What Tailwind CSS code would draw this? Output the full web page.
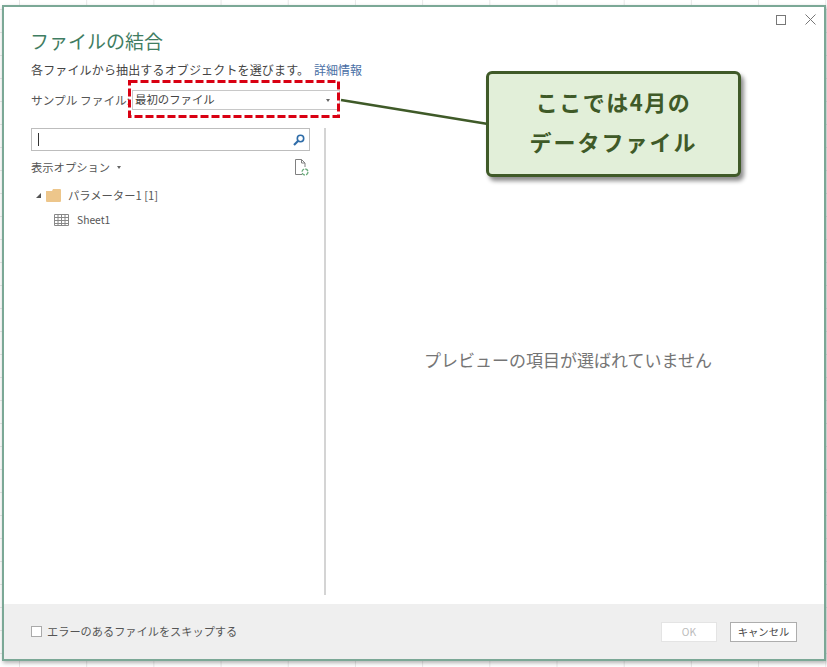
<!DOCTYPE html>
<html lang="ja"><head><meta charset="utf-8"><script src="https://cdn.jsdelivr.net/npm/@tailwindcss/browser@4"></script></head>
<body class="m-0 overflow-hidden bg-white font-['Noto_Sans_CJK_JP','Noto_Sans',sans-serif]">
<div class="relative h-[667px] w-[827px] overflow-hidden bg-[linear-gradient(to_right,#e8e8e8_1px,transparent_1px),linear-gradient(to_bottom,#e8e8e8_1px,transparent_1px)] bg-[size:67.2px_23px] bg-[position:19px_9px] pt-[5px] pl-[2px]">
  <div class="flex h-[656px] w-[824px] flex-col border-2 border-[#7ba896] bg-white shadow-[1px_2px_4px_rgba(0,0,0,0.3)]">
    <div class="flex h-[20px] shrink-0 items-end justify-end gap-[19px] pr-[8px] pb-[2px]">
      <svg width="10" height="10" viewBox="0 0 10 10" fill="none" stroke="#777"><rect x=".5" y=".5" width="9" height="9"/></svg>
      <svg width="11" height="11" viewBox="0 0 11 11" fill="none" stroke="#777"><path d="M.5.5l10 10M10.500.5l-10 10"/></svg>
    </div>
    <div class="flex flex-1 flex-col pl-[27px]">
      <h1 class="-ml-px text-[19px] leading-[28px] font-normal text-[#3f7d62]">ファイルの結合</h1>
      <p class="mt-[5px] text-[12px] leading-[20px] tracking-[0.15px] text-[#444]">各ファイルから抽出するオブジェクトを選びます。 <span class="ml-[2px] tracking-normal text-[#4a6fa5]">詳細情報</span></p>
      <div class="mt-[10px] flex items-center">
        <span class="w-[101px] text-[11.7px] whitespace-nowrap text-[#555]">サンプル ファイル:</span>
        <div class="flex h-[20px] w-[208px] items-center justify-between border border-[#c8c8c8] pr-[9px] pl-[2px] text-[11.4px] text-[#444]">最初のファイル<span class="h-0 w-0 border-x-[2.5px] border-t-[3px] border-x-transparent border-t-[#666]"></span></div>
      </div>
      <div class="mt-[18px] flex flex-1">
        <div class="w-[279px] shrink-0">
          <div class="flex h-[23px] items-center justify-between border border-[#bdbdbd] pr-[4px] pl-[6px]">
            <span class="h-[13px] w-px bg-[#333]"></span>
            <svg width="12" height="12" viewBox="0 0 12 12" fill="none" stroke="#2e6ca8" stroke-width="1.6"><circle cx="7.500" cy="4.500" r="3.200"/><path d="M5 7l-4 4" stroke-width="2.200"/></svg>
          </div>
          <div class="mt-[6px] flex items-center justify-between text-[11.3px] text-[#555]">
            <span class="flex items-center gap-[7px] leading-[20px]">表示オプション<span class="h-0 w-0 border-x-[2.5px] border-t-[3px] border-x-transparent border-t-[#666]"></span></span>
            <svg class="mt-[1px] mr-[1px]" width="15" height="17" viewBox="0 0 15 17" fill="none"><path d="M8 15.500H1.500V.5h6l3.500 3.500v4M7.500.5v3.500H11" stroke="#808080"/><circle cx="11" cy="13" r="3" stroke="#6bab7c" stroke-width="1.300" stroke-dasharray="3.500 1.200"/></svg>
          </div>
          <div class="mt-[8px] flex h-[20px] items-center pl-[5px] text-[11.3px] text-[#555]">
            <span class="h-0 w-0 border-b-[5px] border-l-[5px] border-b-[#555] border-l-transparent"></span>
            <svg class="ml-[5px]" width="15" height="13" viewBox="0 0 15 13"><path d="M0 2h6l1-2h7q1 0 1 1v11q0 1-1 1H1q-1 0-1-1z" fill="#edc68b"/></svg>
            <span class="ml-[7px]">パラメーター1 [1]</span>
          </div>
          <div class="mt-[5px] flex h-[20px] items-center pl-[23px] text-[10.3px] text-[#555]">
            <svg width="15" height="12" viewBox="0 0 15 12" fill="none" stroke="#888"><path d="M.5.5h14v11H.5zM.5 3.500h14M.5 6.500h14M.5 9.500h14M4 .5v11M7.500.5v11M11 .5v11"/></svg>
            <span class="ml-[8px]">Sheet1</span>
          </div>
        </div>
        <div class="mb-[9px] ml-[14px] w-[2px] bg-[#d4d4d4]"></div>
        <div class="flex flex-1 items-center justify-center pr-[14px] pb-[13px] text-[17px] text-[#757575]">プレビューの項目が選ばれていません</div>
      </div>
    </div>
    <div class="flex h-[55px] shrink-0 items-center justify-between bg-[#efefef] pr-[27px] pl-[27px]">
      <label class="flex items-center gap-[5px] text-[11.200px] text-[#555]"><span class="h-[11px] w-[11px] border border-[#aaa] bg-white"></span>エラーのあるファイルをスキップする</label>
      <div class="flex gap-[13px] text-[10.300px]">
        <span class="flex h-[20px] w-[56px] items-center justify-center border border-[#e4e4e4] bg-white text-[#bbb]">OK</span>
        <span class="flex h-[20px] w-[67px] items-center justify-center border border-[#adadad] bg-white text-[#444]">キャンセル</span>
      </div>
    </div>
  </div>
  <svg class="absolute top-0 left-0" width="827" height="667" fill="none"><rect x="129.500" y="81.500" width="209" height="35" stroke="#d90012" stroke-width="3" stroke-dasharray="8 3"/><path d="M341 100l147 24" stroke="#3f5a28" stroke-width="2.500"/></svg>
  <div class="absolute top-[71px] left-[486px] flex h-[106px] w-[255px] flex-col items-center justify-center gap-[9px] rounded-[6px] border-[3px] border-[#3f5a28] bg-[#e2efd9] pb-[6px] text-[22px] leading-[31px] font-bold tracking-[1.500px] text-[#3f5a28] shadow-[3px_4px_4px_rgba(0,0,0,0.45)]">
    <span>ここでは4月の</span><span class="tracking-[2px]">データファイル</span>
  </div>
</div>
</body></html>
